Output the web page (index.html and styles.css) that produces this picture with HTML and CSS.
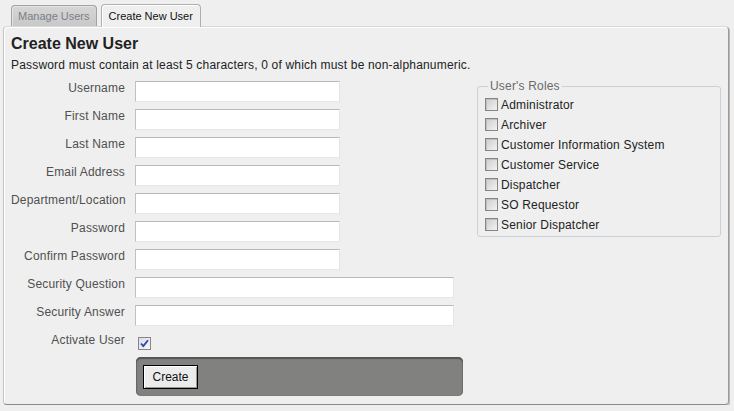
FILE: index.html
```html
<!DOCTYPE html>
<html>
<head>
<meta charset="utf-8">
<link rel="stylesheet" href="styles.css">
</head>
<body>
<div class="tabs">
  <div class="tab">Manage Users</div>
  <div class="tab tab-active">Create New User</div>
</div>
<div class="panel">
  <h1 class="title">Create New User</h1>
  <p class="note">Password must contain at least 5 characters, 0 of which must be non-alphanumeric.</p>
  <div class="content">
    <div class="form">
      <label class="lbl">Username</label><input class="field" type="text">
      <label class="lbl">First Name</label><input class="field" type="text">
      <label class="lbl">Last Name</label><input class="field" type="text">
      <label class="lbl">Email Address</label><input class="field" type="text">
      <label class="lbl">Department/Location</label><input class="field" type="text">
      <label class="lbl">Password</label><input class="field" type="password">
      <label class="lbl">Confirm Password</label><input class="field" type="password">
      <label class="lbl">Security Question</label><input class="field field-wide" type="text">
      <label class="lbl">Security Answer</label><input class="field field-wide" type="text">
      <label class="lbl">Activate User</label>
      <div class="check-cell"><span class="cb cb-checked"><svg width="11" height="11" viewBox="0 0 11 11"><path d="M2 5.5 L4.3 8 L9 2.2" fill="none" stroke="#2a47a6" stroke-width="1.8"/></svg></span></div>
      <div class="actions"><button class="btn" type="button">Create</button></div>
    </div>
    <fieldset class="roles">
      <legend class="roles-legend">User's Roles</legend>
      <div class="role"><span class="cb"></span><span>Administrator</span></div>
      <div class="role"><span class="cb"></span><span>Archiver</span></div>
      <div class="role"><span class="cb"></span><span>Customer Information System</span></div>
      <div class="role"><span class="cb"></span><span>Customer Service</span></div>
      <div class="role"><span class="cb"></span><span>Dispatcher</span></div>
      <div class="role"><span class="cb"></span><span>SO Requestor</span></div>
      <div class="role"><span class="cb"></span><span>Senior Dispatcher</span></div>
    </fieldset>
  </div>
</div>
</body>
</html>
```
FILE: styles.css
```css
* { box-sizing: border-box; }
body {
  margin: 0;
  background: #efefef;
  font-family: "Liberation Sans", Arial, sans-serif;
  font-size: 12px;
  color: #222;
}
.tabs {
  display: flex;
  align-items: flex-end;
  gap: 4px;
  padding: 4px 0 0 11px;
}
.tab {
  height: 21px;
  padding: 0 6px;
  font-size: 11px;
  line-height: 20px;
  color: #7a7f88;
  background: linear-gradient(#d6d6d6, #c8c8c8);
  border: 1px solid #a2a2a2;
  border-bottom: none;
  border-radius: 4px 4px 0 0;
  box-shadow: inset 1px 1px 0 #e4e4e4;
}
.tab-active {
  position: relative;
  z-index: 1;
  height: 23px;
  padding: 1px 7px 0;
  margin-bottom: -1px;
  color: #111;
  background: #efefef;
  border-color: #b0b0b0;
  box-shadow: inset 1px 1px 0 #fff;
}
.panel {
  margin-left: 3px;
  width: 726px;
  border: 1px solid #c4c4c4;
  border-top-color: #d8d8d8;
  border-right-color: #9a9a9a;
  border-bottom-color: #8a8a8a;
  border-radius: 4px;
  box-shadow: inset 1px 1px 0 #fff, 1px 1px 0 #b8b8b8;
  padding: 7px 7px 8px 7px;
}
.title {
  margin: 0;
  font-size: 16px;
  line-height: 19px;
  font-weight: bold;
  color: #222;
}
.note {
  margin: 5px 0 0;
  line-height: 14px;
  letter-spacing: 0.18px;
}
.content {
  display: flex;
  align-items: flex-start;
  gap: 14px;
  margin-top: 9px;
}
.form {
  display: grid;
  grid-template-columns: 114px 328px;
  column-gap: 10px;
  row-gap: 7px;
}
.lbl {
  text-align: right;
  line-height: 14px;
  color: #505050;
  letter-spacing: 0.18px;
  align-self: start;
  white-space: nowrap;
}
.field {
  width: 205px;
  height: 21px;
  margin: 0;
  padding: 1px 3px;
  background: #fff;
  border: 1px solid;
  border-color: #b8b8c2 #e4e4e4 #e6e6e6 #c0c0c8;
  font: inherit;
}
.field-wide { width: 319px; }
.check-cell { height: 17px; }
.cb {
  display: inline-block;
  flex: none;
  width: 13px;
  height: 13px;
  border: 1px solid #858585;
  background: linear-gradient(135deg, #cdcdcd, #f2f2f2);
  box-shadow: inset 1px 1px 0 #c0c0c0;
}
.cb-checked {
  margin: 4px 0 0 3px;
  background: linear-gradient(135deg, #dcdce4, #f6f6fa);
  box-shadow: none;
}
.cb-checked svg { display: block; }
.actions {
  grid-column: 2;
  width: 327px;
  height: 39px;
  margin-left: 1px;
  padding: 8px 7px;
  background: #818280;
  border-radius: 5px;
  box-shadow: inset 0 2px 1px #555, inset 1px 0 1px #666, inset -1px 0 1px #707070;
}
.btn {
  display: block;
  width: 55px;
  height: 24px;
  margin: 0;
  padding: 0;
  font: inherit;
  color: #111;
  background: #ececec;
  border: 1px solid #000;
  border-radius: 0;
  box-shadow: inset 1px 1px 0 #fff, inset -1px -1px 0 #9a9a9a;
}
.roles {
  width: 244px;
  margin: -2px 0 0;
  padding: 2px 7px 1px;
  border: 1px solid #c8d0da;
  border-radius: 3px;
}
.roles-legend {
  margin-left: 3px;
  padding: 0 2px;
  line-height: 14px;
  color: #6a6a6a;
  letter-spacing: 0.18px;
}
.role {
  display: flex;
  align-items: flex-start;
  height: 20px;
  line-height: 20px;
  color: #222;
  letter-spacing: 0.18px;
  white-space: nowrap;
}
.role .cb {
  margin: 3px 3px 0 0;
}
```
